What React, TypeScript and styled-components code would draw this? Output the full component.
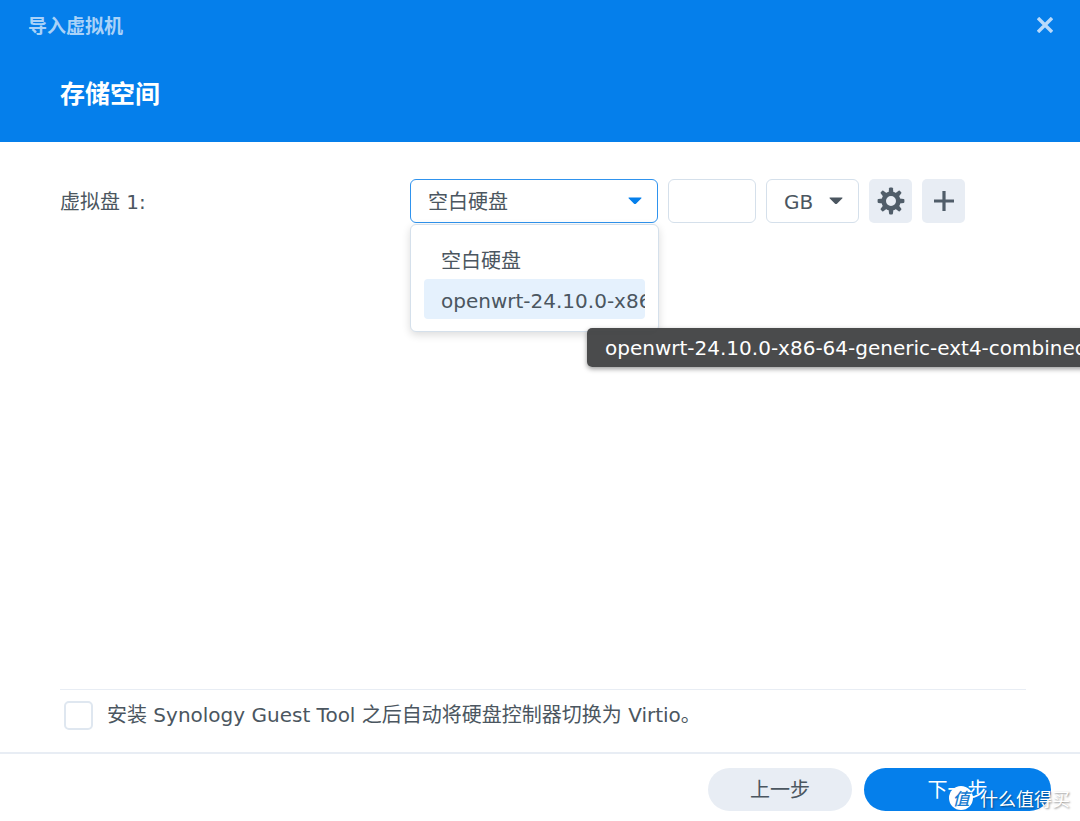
import React from "react";
import styled, { createGlobalStyle } from "styled-components";

const GlobalStyle = createGlobalStyle`
  *, *::before, *::after { box-sizing: border-box; }
  body { margin: 0; background: #fff; }
  body, button, input, select {
    font-family: "DejaVu Sans", "Noto Sans CJK SC", sans-serif;
    font-size: 20px;
    line-height: 24px;
    color: #4b5660;
  }
`;

const Dialog = styled.main`
  position: relative;
  display: flex;
  flex-direction: column;
  min-height: 100vh;
  overflow: hidden;
`;

const Header = styled.header`
  display: flex;
  flex-direction: column;
  gap: 36px;
  padding: 13px 33px 30px 28px;
  background: #057feb;
`;

const TitleBar = styled.div`
  display: flex;
  align-items: center;
  justify-content: space-between;
`;

const WindowTitle = styled.h1`
  margin: 0;
  font: bold 19px/24px "Noto Sans CJK SC", sans-serif;
  color: #a9d2f8;
`;

const CloseButton = styled.button`
  display: flex;
  align-items: center;
  justify-content: center;
  width: 24px;
  height: 24px;
  margin-right: -10px;
  padding: 0;
  border: 0;
  background: none;
  color: #b9dafa;
`;

const StepTitle = styled.h2`
  margin: 0 0 0 32px;
  font: bold 25px/39px "Noto Sans CJK SC", sans-serif;
  color: #fff;
`;

const Body = styled.section`
  display: flex;
  flex: 1;
  flex-direction: column;
  justify-content: space-between;
  padding: 37px 54px 0 60px;
`;

const DiskRow = styled.div`
  display: flex;
  align-items: center;
`;

const DiskLabel = styled.label`
  flex: 0 0 350px;
  padding-top: 2px;
`;

const Controls = styled.div`
  display: flex;
  gap: 10px;
`;

const SelectBox = styled.div<{ $width: number; $active?: boolean }>`
  position: relative;
  display: grid;
  align-items: center;
  width: ${(p) => p.$width}px;
  color: ${(p) => (p.$active ? "#057feb" : "#4b5660")};

  > select, > svg { grid-area: 1 / 1; }
  > select { border-color: ${(p) => (p.$active ? "#2f93ee" : "#d5e0eb")}; }
  > svg { justify-self: end; margin-right: 16px; pointer-events: none; }
`;

const Select = styled.select`
  width: 100%;
  height: 44px;
  padding: 2px 32px 0 17px;
  border: 1px solid;
  border-radius: 6px;
  outline: 0;
  appearance: none;
  background: #fff;
`;

const SizeInput = styled.input`
  width: 88px;
  height: 44px;
  padding: 0 12px;
  border: 1px solid #d5e0eb;
  border-radius: 6px;
  outline: 0;
`;

const IconButton = styled.button`
  display: flex;
  align-items: center;
  justify-content: center;
  width: 43px;
  height: 44px;
  padding: 0;
  border: 0;
  border-radius: 5px;
  background: #e8edf4;
  color: #505d69;
`;

const Menu = styled.ul`
  position: absolute;
  top: 45px;
  left: 0;
  z-index: 1;
  width: 249px;
  margin: 0;
  padding: 14px 13px 12px;
  border: 1px solid #d5e0eb;
  border-radius: 6px;
  background: #fff;
  box-shadow: 0 3px 8px rgba(0, 0, 0, 0.14);
  color: #4b5660;
  list-style: none;
`;

const MenuItem = styled.li<{ $hover?: boolean }>`
  height: 40px;
  padding: 0 0 0 17px;
  overflow: hidden;
  border-radius: 4px;
  background: ${(p) => (p.$hover ? "#e5f1fd" : "transparent")};
  line-height: 44px;
  white-space: nowrap;
`;

const Tooltip = styled.div`
  position: absolute;
  top: 149px;
  left: 177px;
  z-index: 2;
  padding: 1px 18px 0;
  border-radius: 5px;
  background: rgba(64, 65, 66, 0.95);
  box-shadow: 0 2px 5px rgba(0, 0, 0, 0.4);
  color: #fff;
  line-height: 38px;
  white-space: nowrap;
`;

const OptionRow = styled.div`
  display: flex;
  align-items: center;
  gap: 14px;
  height: 63px;
  padding: 0 4px 12px;
  border-top: 1px solid #e8edf4;
`;

const Checkbox = styled.input`
  width: 29px;
  height: 29px;
  margin: 0;
  border: 2px solid #dfe7f0;
  border-radius: 5px;
  appearance: none;
  background: #fff;
`;

const Footer = styled.footer`
  display: flex;
  justify-content: flex-end;
  gap: 12px;
  padding: 14px 29px 10px;
  border-top: 2px solid #e8edf4;
`;

const PillButton = styled.button<{ $primary?: boolean }>`
  width: ${(p) => (p.$primary ? 187 : 144)}px;
  height: 43px;
  padding: 0;
  border: 0;
  border-radius: 22px;
  background: ${(p) => (p.$primary ? "#057feb" : "#e8edf4")};
  color: ${(p) => (p.$primary ? "#fff" : "#4b5660")};
`;

const Watermark = styled.div`
  position: absolute;
  right: 10px;
  bottom: 11px;
  display: flex;
  align-items: center;
  gap: 7px;
  color: #fff;
  font: 18px/24px "Noto Sans CJK SC", sans-serif;
  text-shadow: 1px 1px 2px rgba(0, 0, 0, 0.45);
  pointer-events: none;
`;

const WatermarkBadge = styled.span`
  width: 24px;
  height: 24px;
  border-radius: 50%;
  background: #fff;
  color: #1a7cd0;
  font-size: 17px;
  font-weight: 500;
  font-style: italic;
  line-height: 23px;
  text-align: center;
  text-shadow: none;
`;

const Caret = () => (
  <svg width="14" height="8" viewBox="0 0 14 8" fill="currentColor" aria-hidden="true">
    <path d="M1.2.5h11.6c.7 0 .9.6.4 1.1L8.2 6.5c-.8.8-1.6.8-2.4 0L.8 1.6C.3 1.1.5.5 1.2.5Z" />
  </svg>
);

const teeth = [0, 45, 90, 135, 180, 225, 270, 315];

const Gear = () => (
  <svg width="28" height="28" viewBox="-14 -14 28 28" aria-hidden="true">
    <circle r="7.3" fill="none" stroke="currentColor" strokeWidth="4.6" />
    {teeth.map((angle) => (
      <path
        key={angle}
        d="M-2.4-8.5-1.9-12.7Q-1.7-13.4-1-13.4H1Q1.7-13.4 1.9-12.7L2.4-8.5Z"
        fill="currentColor"
        transform={`rotate(${angle})`}
      />
    ))}
  </svg>
);

const Plus = () => (
  <svg width="20" height="20" viewBox="0 0 20 20" aria-hidden="true">
    <path d="M10 0v20M0 10h20" fill="none" stroke="currentColor" strokeWidth="3.2" />
  </svg>
);

const Cross = () => (
  <svg width="16" height="16" viewBox="0 0 16 16" aria-hidden="true">
    <path d="m1 1 14 14M15 1 1 15" fill="none" stroke="currentColor" strokeWidth="3.4" />
  </svg>
);

export default function App() {
  return (
    <>
      <GlobalStyle />
      <Dialog>
        <Header>
          <TitleBar>
            <WindowTitle>导入虚拟机</WindowTitle>
            <CloseButton type="button" aria-label="关闭">
              <Cross />
            </CloseButton>
          </TitleBar>
          <StepTitle>存储空间</StepTitle>
        </Header>

        <Body>
          <DiskRow>
            <DiskLabel htmlFor="disk">虚拟盘 1:</DiskLabel>
            <Controls>
              <SelectBox $width={248} $active>
                <Select id="disk" defaultValue="blank">
                  <option value="blank">空白硬盘</option>
                </Select>
                <Caret />
                <Menu role="listbox">
                  <MenuItem role="option">空白硬盘</MenuItem>
                  <MenuItem role="option" $hover>
                    openwrt-24.10.0-x86-64-generic-ext4-combined
                  </MenuItem>
                </Menu>
                <Tooltip role="tooltip">openwrt-24.10.0-x86-64-generic-ext4-combined</Tooltip>
              </SelectBox>
              <SizeInput type="text" aria-label="大小" />
              <SelectBox $width={93}>
                <Select aria-label="单位" defaultValue="GB">
                  <option>GB</option>
                </Select>
                <Caret />
              </SelectBox>
              <IconButton type="button" aria-label="设置">
                <Gear />
              </IconButton>
              <IconButton type="button" aria-label="添加">
                <Plus />
              </IconButton>
            </Controls>
          </DiskRow>

          <OptionRow>
            <Checkbox type="checkbox" id="virtio" />
            <label htmlFor="virtio">安装 Synology Guest Tool 之后自动将硬盘控制器切换为 Virtio。</label>
          </OptionRow>
        </Body>

        <Footer>
          <PillButton type="button">上一步</PillButton>
          <PillButton type="button" $primary>
            下一步
          </PillButton>
        </Footer>

        <Watermark>
          <WatermarkBadge>值</WatermarkBadge>
          什么值得买
        </Watermark>
      </Dialog>
    </>
  );
}
